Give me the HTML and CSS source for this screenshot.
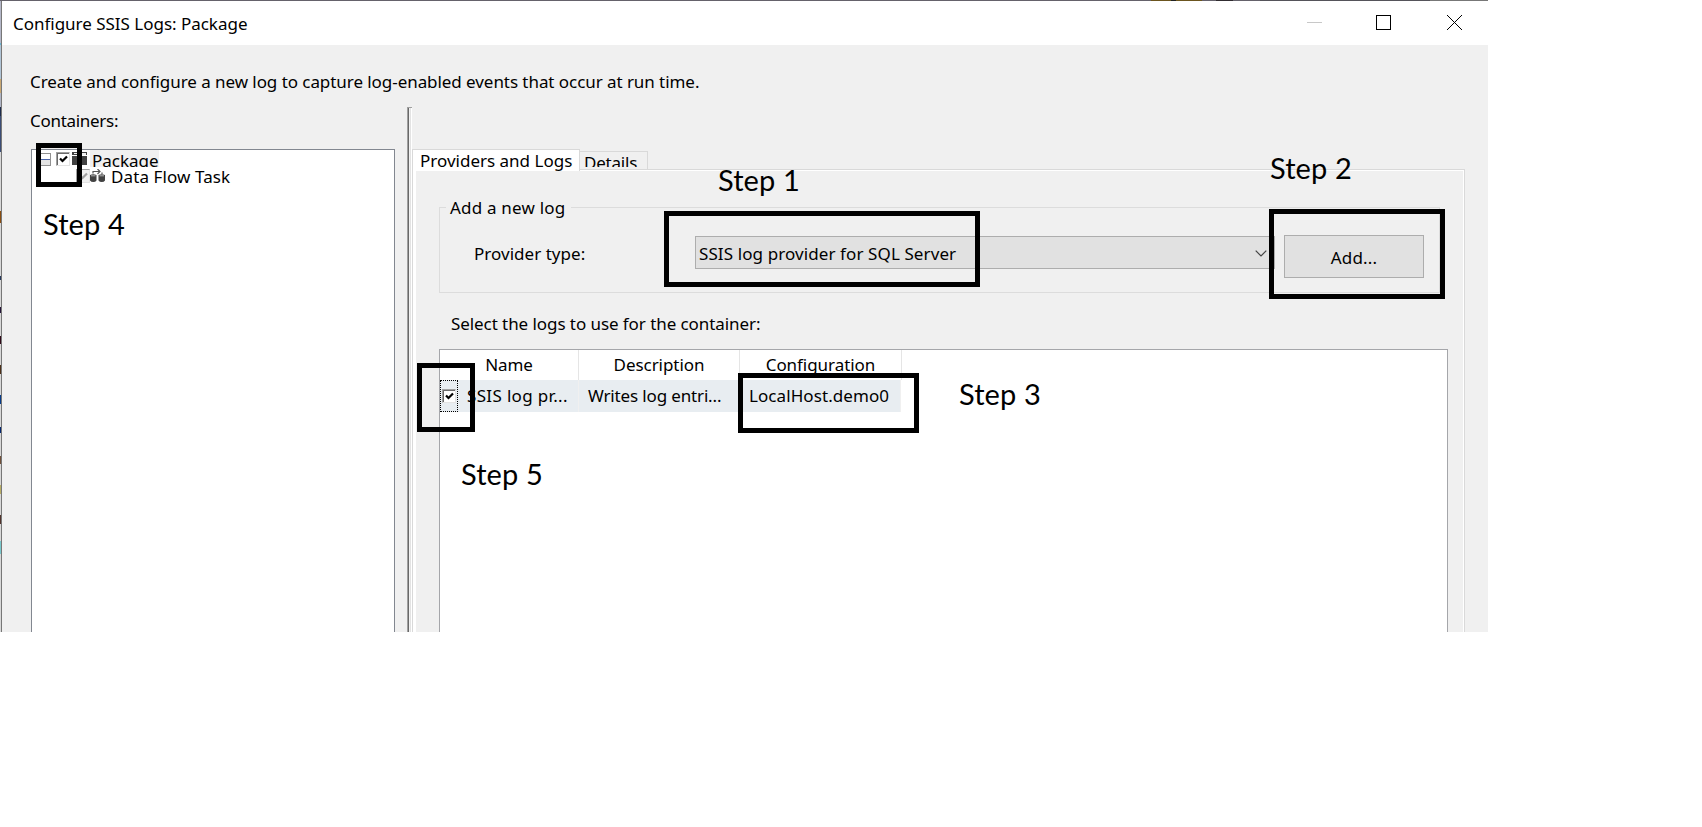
FILE: index.html
```
<!DOCTYPE html>
<html lang="en">
<head>
<meta charset="utf-8">
<title>Configure SSIS Logs: Package</title>
<link rel="stylesheet" href="styles.css">
</head>
<body>
<div class="stage">
  <div class="backdrop-top"></div>
  <div class="window-row">
    <div class="backdrop-left"></div>
    <div class="dialog">
      <header class="titlebar">
        <span class="title">Configure SSIS Logs: Package</span>
        <svg class="window-buttons" width="157" height="15" viewBox="0 0 157 15" fill="none" shape-rendering="crispEdges">
          <path d="M0 7.5h15" stroke="#c8c8c8"/>
          <rect x="69.5" y=".5" width="14" height="14" stroke="#000"/>
          <path d="M140 0l15 15M155 0l-15 15" stroke="#000" shape-rendering="auto"/>
        </svg>
      </header>
      <p class="intro">Create and configure a new log to capture log-enabled events that occur at run time.</p>
      <div class="panes">
        <section class="containers">
          <label class="containers-label">Containers:</label>
          <div class="tree">
            <div class="node root">
              <span class="expander"></span>
              <span class="check"><svg width="9" height="9" viewBox="0 0 9 9"><path d="M1 3.5l2.5 2.5L8 1.5" stroke="#000" stroke-width="2.2" fill="none"/></svg></span>
              <svg class="package-icon" width="15" height="13" viewBox="0 0 15 13"><path d="M0 0h15v3H0zM0 4h15v9H0z" fill="#424242"/><path d="M2 1h7v1H2zM10 1h4v2h-4z" fill="#f0f0f0"/></svg>
              <span class="node-name selected">Package</span>
            </div>
            <div class="node child">
              <span class="check disabled"><svg width="9" height="9" viewBox="0 0 9 9"><path d="M1 3.5l2.5 2.5L8 1.5" stroke="#a0a0a0" stroke-width="2.2" fill="none"/></svg></span>
              <svg class="flow-icon" width="15" height="13" viewBox="0 0 15 13"><path d="M0 6q3.200-1.500 6.500 0v5.500q-1 1.500-3.200 1.500T0 11.500zM8.500 6q3.200-1.500 6.500 0v5.500q-1 1.500-3.200 1.500t-3.300-1.500z" fill="#424242"/><path d="M1 6.800h4.500M9.500 6.800h4.500" stroke="#ccc" stroke-width=".8"/><path d="M3 4.500V2.500h6.500M7.500 0l2.500 2.500L7.500 5M12 5V3.500" stroke="#555" stroke-width="1.200" fill="none"/></svg>
              <span class="node-name">Data Flow Task</span>
            </div>
          </div>
        </section>
        <div class="splitter"></div>
        <section class="settings">
          <div class="tabs">
            <div class="tab active">Providers and Logs</div>
            <div class="tab"><span class="tab-text">Details</span></div>
          </div>
          <div class="tab-page">
            <fieldset class="new-log">
              <legend>Add a new log</legend>
              <div class="provider-row">
                <span class="provider-label">Provider type:</span>
                <div class="combo"><span>SSIS log provider for SQL Server</span><svg width="12" height="7" viewBox="0 0 12 7"><path d="M.7.7L6 6L11.300.7" stroke="#444" stroke-width="1.200" fill="none"/></svg></div>
                <div class="button">Add...</div>
              </div>
            </fieldset>
            <p class="logs-label">Select the logs to use for the container:</p>
            <div class="log-list">
              <div class="row head"><span>Name</span><span>Description</span><span>Configuration</span></div>
              <div class="row entry">
                <span class="name-cell"><i class="focus"><span class="check"><svg width="9" height="9" viewBox="0 0 9 9"><path d="M1 3.5l2.500 2.500L8 1.500" stroke="#000" stroke-width="2.200" fill="none"/></svg></span></i><b>SSIS log pr...</b></span>
                <span class="desc-cell">Writes log entri...</span>
                <span class="config-cell">LocalHost.demo0</span>
              </div>
            </div>
          </div>
        </section>
      </div>
    </div>
  </div>

  <div class="mark mark-provider"></div>
  <div class="mark mark-add"></div>
  <div class="mark mark-config"></div>
  <div class="mark mark-package"></div>
  <div class="mark mark-log"></div>
  <div class="step step-1">Step 1</div>
  <div class="step step-2">Step 2</div>
  <div class="step step-3">Step 3</div>
  <div class="step step-4">Step 4</div>
  <div class="step step-5">Step 5</div>
</div>
</body>
</html>
```
FILE: styles.css
```
* { box-sizing: border-box; }
body { margin: 0; background: #fff; color: #000; font: 17px/24px "Noto Sans", "Open Sans", sans-serif; }
p { margin: 0; }
svg { display: block; flex: none; }

.stage { position: relative; width: 1488px; height: 632px; overflow: hidden; white-space: nowrap; }
.backdrop-top {
  height: 1px;
  background: linear-gradient(90deg, #65626b 1151px, #6b551f 1151px 1171px, #222 1171px 1176px, #6b551f 1176px 1202px, #65626b 1202px 1216px, #302c30 1216px 1233px, #65626b 1233px 1260px, #55535a 1260px 1430px, #777 1430px);
}
.window-row { display: flex; height: 631px; }
.backdrop-left {
  width: 2px;
  border-right: 1px solid #777;
  background: linear-gradient(#b4b7c8 42px, #69b4d0 42px 44px, #b0c4d6 44px 78px, #c9a873 78px 92px, #b0b5c5 92px 106px, #1d2b4b 106px 115px, #3b4d76 115px 151px, #d8d8d8 151px 210px, #8a4d10 210px 222px, #d8d8d8 222px 275px, #27395c 275px 279px, #d8d8d8 279px 306px, #251538 306px 312px, #d8d8d8 312px 335px, #300a18 335px 343px, #d8d8d8 343px 364px, #4d3018 364px 373px, #d8d8d8 373px 394px, #073b88 394px 403px, #d8d8d8 403px 426px, #05276f 426px 432px, #d8d8d8 432px 455px, #705039 455px 463px, #d8d8d8 463px 484px, #b8ad65 484px 493px, #d8d8d8 493px 514px, #51332c 514px 523px, #d8d8d8 523px 540px, #79c9cd 540px 553px, #d8d8d8 553px);
}
.dialog { display: flex; flex-direction: column; width: 1486px; background: #f0f0f0; }

.titlebar { display: flex; justify-content: space-between; height: 44px; padding: 11px 24px 0 10px; background: #fff; }
.title { padding-left: 1px; letter-spacing: -.02px; }
.window-buttons { margin: 3px 0 0; }
.intro { padding: 25px 0 0 28px; letter-spacing: -.06px; }

.panes { display: flex; flex: 1; min-height: 0; padding-left: 28px; }
.containers { display: flex; flex-direction: column; width: 377px; padding-top: 15px; }
.containers-label { letter-spacing: -.29px; }
.tree { flex: 1; width: 364px; margin: 16px 0 0 1px; border: 1px solid #828790; border-bottom: 0; background: #fff; }
.node { display: flex; align-items: flex-start; height: 17px; overflow: hidden; }
.root { padding: 1px 0 0 8px; }
.expander { width: 11px; height: 13px; margin: 2px 5px 0 0; border: 1px solid #919191; background: linear-gradient(#fff 5px, #4b63a7 5px 6px, #e4e4e4 6px); }
.check { display: grid; place-items: center; flex: none; width: 14px; height: 14px; border: 1px solid; border-color: #a0a0a0 #e3e3e3 #e3e3e3 #a0a0a0; background: #fff; box-shadow: inset 1px 1px #696969; }
.root .check { margin: 1px 2px 0 0; }
.disabled { box-shadow: none; background: #f0f0f0; }
.package-icon { margin-top: 1px; }
.node-name { height: 24px; margin-left: 3px; padding-left: 1px; }
.selected { width: 69px; padding-left: 2px; background: #f0f0f0; margin-top: -2px; }
.child { height: 24px; padding: 0 0 0 44px; }
.child .check { margin-top: 2px; }
.flow-icon { margin: 2px 0 0 0; }
.child .node-name { margin: -2px 0 0 6px; padding-left: 0; letter-spacing: .1px; }

.splitter { width: 5px; margin-top: 13px; border-top: 1px solid #a0a0a0; background: linear-gradient(90deg, #a0a0a0 1px, #696969 1px 2px, #f0f0f0 2px 3px, #e3e3e3 3px 4px, #fff 4px); }
.settings { display: flex; flex-direction: column; width: 1053px; padding-top: 55px; }
.tabs { display: flex; align-items: flex-end; height: 20px; }
.tab { width: 68px; height: 18px; padding-left: 4px; border: 1px solid #d9d9d9; border-width: 1px 1px 0 0; overflow: hidden; letter-spacing: -.2px; }
.tab-text { display: block; height: 15px; overflow: hidden; line-height: 22px; }
.active { position: relative; width: 168px; height: 22px; margin-bottom: -2px; padding-left: 7px; border-left-width: 1px; background: #fff; letter-spacing: 0; line-height: 21px; }
.tab-page { flex: 1; border: 1px solid #d9d9d9; border-bottom: 0; padding: 25px 15px 0 23px; background: #f0f0f0; box-shadow: inset 3px 1px #fff, inset -1px 0 #fff; }

.new-log { width: 1001px; height: 98px; margin: 0 0 0 3px; padding: 0; border: 1px solid #dcdcdc; min-inline-size: 0; }
.new-log legend { height: 24px; margin-left: 6px; padding: 1px 6px 0 4px; letter-spacing: .2px; }
.provider-row { display: flex; padding: 16px 0 0 34px; }
.provider-label { width: 221px; padding-top: 7px; letter-spacing: .03px; }
.combo { display: flex; justify-content: space-between; width: 580px; height: 33px; margin-top: 1px; padding: 5px 7px 0 3px; border: 1px solid #adadad; background: #e1e1e1; letter-spacing: .1px; }
.combo svg { margin-top: 8px; }
.button { width: 140px; height: 43px; margin-left: 9px; border: 1px solid #adadad; background: #e1e1e1; line-height: 43px; text-align: center; letter-spacing: .2px; }
.logs-label { padding: 19px 0 0 15px; letter-spacing: -.07px; }

.log-list { width: 1009px; height: 284px; margin: 13px 0 0 3px; border: 1px solid #a5a6aa; border-bottom: 0; background: #fff; }
.row { display: grid; grid-template-columns: 139px 161px 162px; width: 462px; }
.head { height: 30px; text-align: center; line-height: 30px; letter-spacing: -.05px; }
.head span { border-right: 1px solid #e5e5e5; }
.entry { height: 32px; width: 461px; grid-template-columns: 139px 161px 161px; background: #e8edf1; line-height: 32px; }
.entry > span { border-right: 1px solid #f0f0f0; }
.name-cell { display: flex; }
.focus { width: 18px; height: 32px; padding: 8px 0 0 1px; border: 1px dotted #000; }
.name-cell b { margin-left: 9px; font-weight: 400; letter-spacing: .34px; }
.desc-cell { padding-left: 9px; letter-spacing: -.15px; }
.config-cell { padding-left: 9px; letter-spacing: .08px; }

/* annotations laid over the dialog */
.mark { position: absolute; border: 5px solid #000; }
.mark-provider { left: 664px; top: 211px; width: 316px; height: 76px; }
.mark-add { left: 1269px; top: 209px; width: 176px; height: 90px; }
.mark-config { left: 738px; top: 373px; width: 181px; height: 60px; }
.mark-package { left: 36px; top: 143px; width: 46px; height: 44px; }
.mark-log { left: 417px; top: 363px; width: 58px; height: 69px; }
.step { position: absolute; font: 29px/34px Lato, "Noto Sans", sans-serif; letter-spacing: .1px; }
.step-1 { left: 718px; top: 163px; }
.step-2 { left: 1270px; top: 151px; }
.step-3 { left: 959px; top: 377px; }
.step-4 { left: 43px; top: 207px; }
.step-5 { left: 461px; top: 457px; }
```
